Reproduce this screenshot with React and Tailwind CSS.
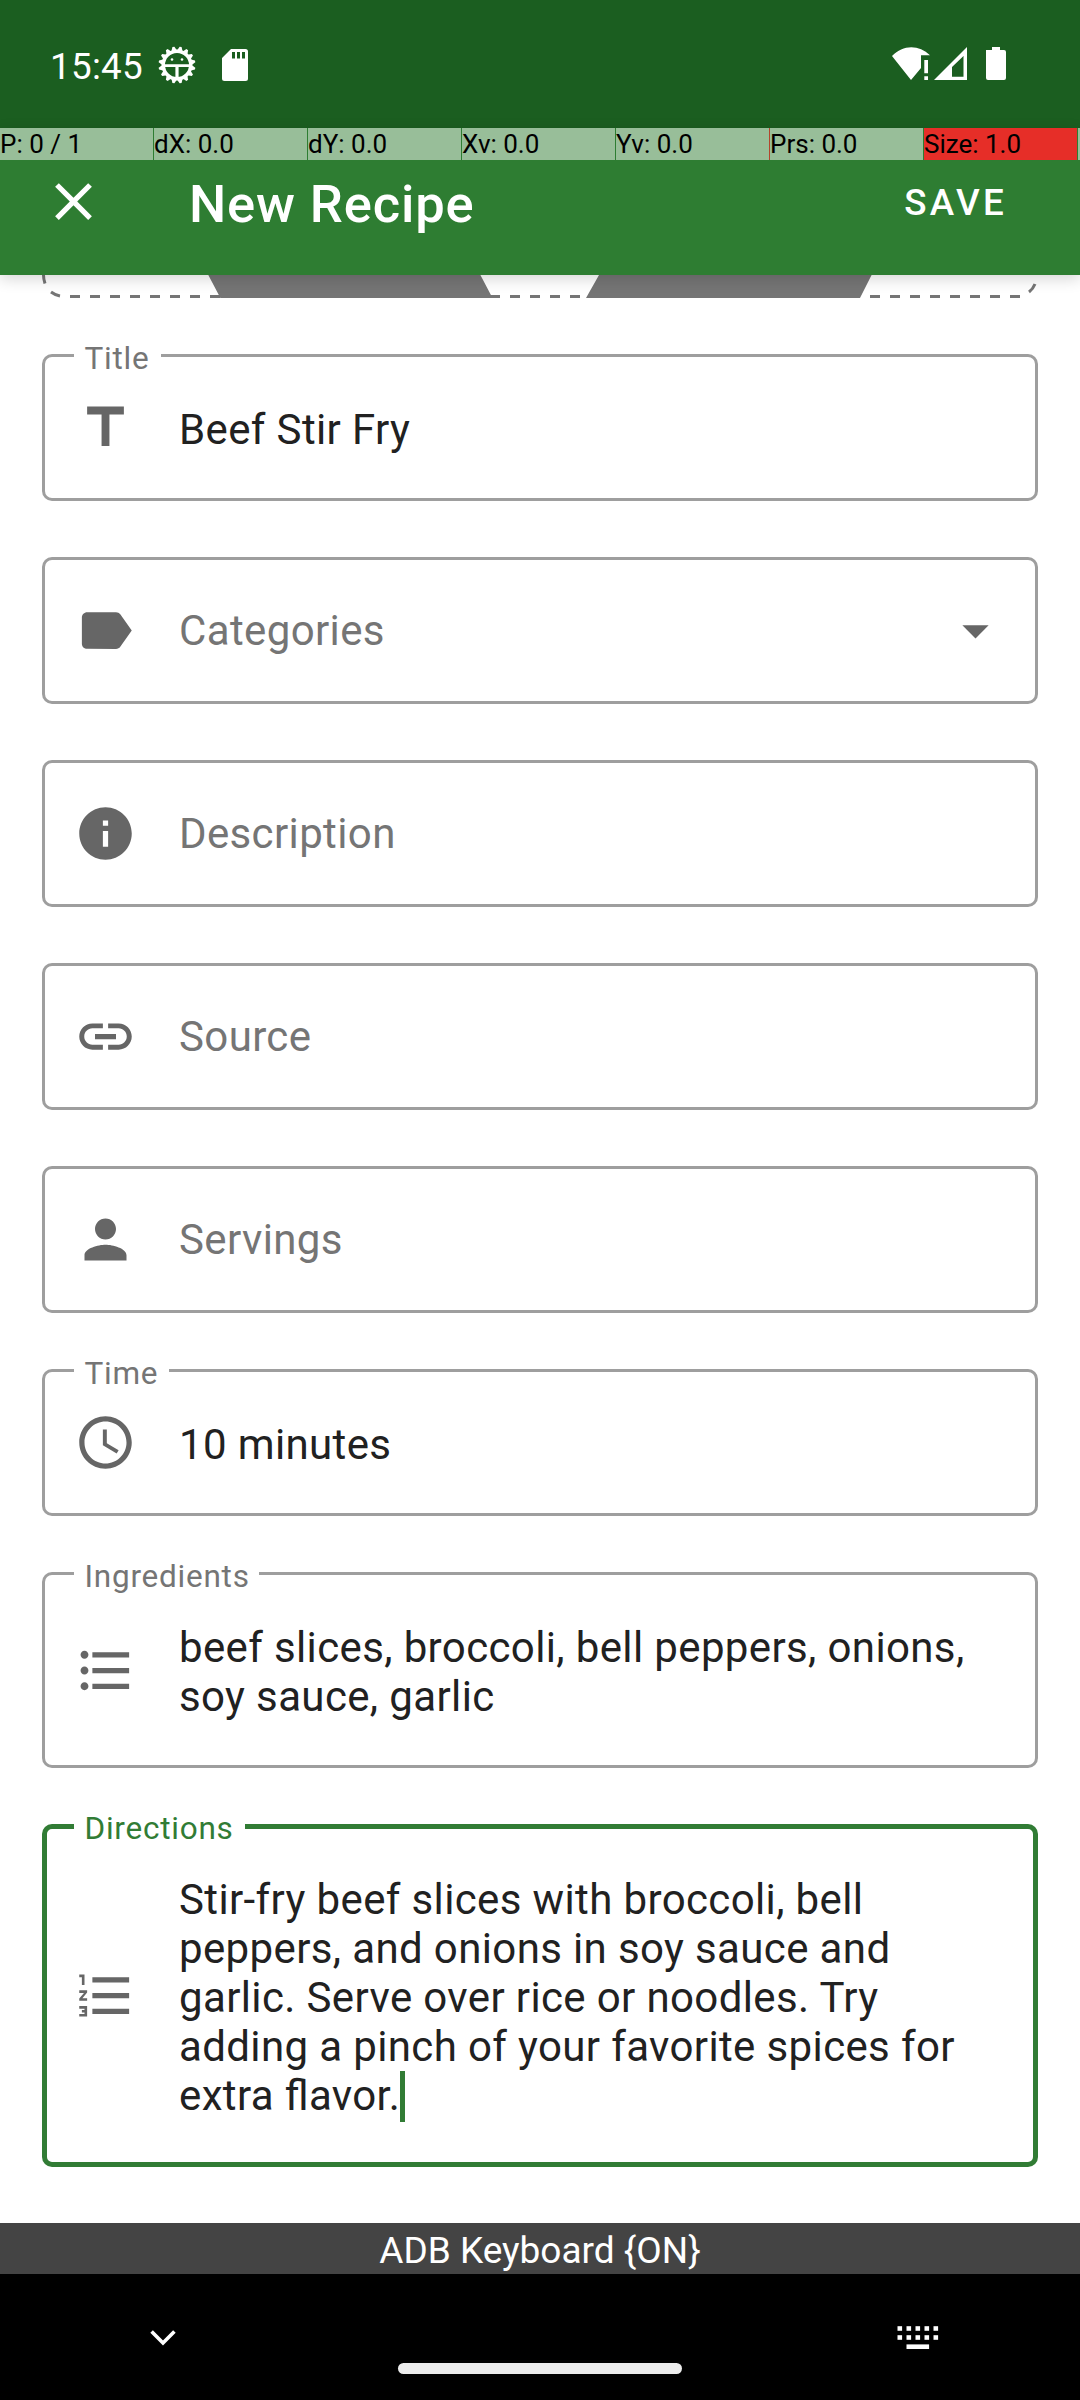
import React from "react";

function Icon({ d, className = "" }) {
  return (
    <svg viewBox="0 0 24 24" className={"size-[63px] shrink-0 " + className} fill="currentColor">
      <path d={d} />
    </svg>
  );
}

const ICONS = {
  close: "M19 6.41 17.59 5 12 10.59 6.41 5 5 6.41 10.59 12 5 17.59 6.41 19 12 13.41 17.59 19 19 17.59 13.41 12z",
  title: "M5 4v3h5.5v12h3V7H19V4z",
  label: "M17.63 5.84C17.27 5.33 16.67 5 16 5L5 5.01C3.9 5.01 3 5.9 3 7v10c0 1.1.9 1.99 2 1.99L16 19c.67 0 1.27-.33 1.63-.84L22 12l-4.37-6.16z",
  info: "M12 2C6.48 2 2 6.48 2 12s4.48 10 10 10 10-4.48 10-10S17.52 2 12 2zm1 15h-2v-6h2v6zm0-8h-2V7h2v2z",
  link: "M3.9 12c0-1.71 1.39-3.1 3.1-3.1h4V7H7c-2.76 0-5 2.24-5 5s2.24 5 5 5h4v-1.9H7c-1.71 0-3.1-1.39-3.1-3.1zM8 13h8v-2H8v2zm9-6h-4v1.9h4c1.71 0 3.1 1.39 3.1 3.1s-1.39 3.1-3.1 3.1h-4V17h4c2.76 0 5-2.24 5-5s-2.24-5-5-5z",
  person: "M12 12c2.21 0 4-1.79 4-4s-1.79-4-4-4-4 1.79-4 4 1.79 4 4 4zm0 2c-2.67 0-8 1.34-8 4v2h16v-2c0-2.66-5.33-4-8-4z",
  clock: "M11.99 2C6.47 2 2 6.48 2 12s4.47 10 9.99 10C17.52 22 22 17.52 22 12S17.52 2 11.99 2zM12 20c-4.42 0-8-3.58-8-8s3.58-8 8-8 8 3.58 8 8-3.58 8-8 8zm.5-13H11v6l5.25 3.15.75-1.23-4.5-2.67z",
  bullets: "M4 10.5c-.83 0-1.5.67-1.5 1.5s.67 1.5 1.5 1.5 1.5-.67 1.5-1.5-.67-1.5-1.5-1.5zm0-6c-.83 0-1.5.67-1.5 1.5S3.17 7.5 4 7.5 5.5 6.83 5.5 6 4.83 4.5 4 4.5zm0 12c-.83 0-1.5.68-1.5 1.5s.68 1.5 1.5 1.5 1.5-.68 1.5-1.5-.67-1.5-1.5-1.5zM7 19h14v-2H7v2zm0-6h14v-2H7v2zm0-8v2h14V5H7z",
  numbers: "M2 17h2v.5H3v1h1v.5H2v1h3v-4H2v1zm1-9h1V4H2v1h1v3zm-1 3h1.8L2 13.1v.9h3v-1H3.2L5 10.9V10H2v1zm5-6v2h14V5H7zm0 14h14v-2H7v2zm0-6h14v-2H7v2z",
  dropdown: "M7 10l5 5 5-5z",
};

function Field({ icon, label, gap = "", hint, lines, active, dropdown }) {
  return (
    <div
      className={
        "relative flex items-center rounded-[10px] pl-8 pr-[31px] " +
        (active ? "inset-ring-[5px] inset-ring-[#317c35]" : "inset-ring-[3px] inset-ring-[#9e9e9e]")
      }
    >
      {label && (
        <span
          className={
            "absolute -top-[14px] left-8 bg-white pl-[10.5px] text-[31.5px] leading-[37px] tracking-[0.024em] whitespace-nowrap " +
            gap + (active ? " text-[#317c35]" : " text-[#757575]")
          }
        >
          {label}
        </span>
      )}
      <Icon d={ICONS[icon]} className="text-[#666666]" />
      <div
        className={
          "ml-[42px] grow text-[42px] leading-[49px] tracking-[0.0088em] whitespace-nowrap [font-feature-settings:'liga'_1] " +
          (hint ? "py-[49px] text-[#757575]" : "pt-[51px] pb-[47px] text-[#212121]")
        }
      >
        {hint}
        {lines &&
          lines.map((line, i) => (
            <p key={line} className="relative w-fit">
              {line}
              {active && i === lines.length - 1 && (
                <span className="absolute top-0 -right-[5px] h-[51px] w-[5px] bg-[#317c35]" />
              )}
            </p>
          ))}
      </div>
      {dropdown && <Icon d={ICONS.dropdown} className="text-[#666666]" />}
    </div>
  );
}

const POINTER = [
  ["P: 0 / 1", "bg-[#98be99]"],
  ["dX: 0.0", "bg-[#98be99]"],
  ["dY: 0.0", "bg-[#98be99]"],
  ["Xv: 0.0", "bg-[#98be99]"],
  ["Yv: 0.0", "bg-[#98be99]"],
  ["Prs: 0.0", "bg-[#98be99]"],
  ["Size: 1.0", "bg-[#e62e28]"],
];

const TEETH = Array.from({ length: 16 }, (_, i) => i * 22.5 + 11.25);

function StatusBar() {
  return (
    <header className="flex h-32 shrink-0 items-start bg-[#1b5e20] text-white">
      <span className="mt-[45px] ml-[50px] w-[96px] text-[36.75px] leading-[43px] tracking-[0.3px] whitespace-nowrap">
        15:45
      </span>
      <svg viewBox="0 0 40 40" className="mt-[45px] ml-[11px] size-10">
        <circle cx="20" cy="20" r="13.7" fill="none" stroke="white" strokeWidth="3.4" />
        {TEETH.map((a) => (
          <path key={a} d="M17 6 19 1.500h2L23 6z" fill="white" transform={`rotate(${a} 20 20)`} />
        ))}
        <path d="M7 19.200h26v2.800H21.600v12h-3.200V22H7z" fill="white" />
        <circle cx="15" cy="14.500" r="1.300" fill="white" />
        <circle cx="25" cy="14.500" r="1.300" fill="white" />
      </svg>
      <svg viewBox="0 0 26 32" className="mt-[49px] ml-[25px] h-8 w-[26px]">
        <path
          fill="white"
          fillRule="evenodd"
          d="M9 0h14.5a2.5 2.5 0 0 1 2.5 2.5v27a2.5 2.5 0 0 1-2.5 2.5h-21A2.5 2.5 0 0 1 0 29.500V9zM10 3v6.500h3V3zM15 3v6.500h3V3zM20 3v6.500h3V3z"
        />
      </svg>
      <svg viewBox="0 0 116 36" className="mt-[46px] mr-[72px] ml-auto h-9 w-[116px]" fill="white">
        <path d="M0 10C11-1.500 27-1.500 38 9.300H29V22L19 34z" />
        <path d="M32.300 14H36v13.300h-3.700zM32.300 30.300H36V34h-3.700z" />
        <path fillRule="evenodd" d="M42 34 75 1v33zM60 21v9.700h11.500V10z" />
        <path d="M94 4h6V1h8v3h4a2 2 0 0 1 2 2v26a2 2 0 0 1-2 2H96a2 2 0 0 1-2-2z" />
      </svg>
    </header>
  );
}

export default function App() {
  return (
    <div className="flex h-[2400px] w-[1080px] flex-col overflow-hidden bg-white font-['Roboto',sans-serif]">
      <StatusBar />

      <div className="relative z-10 h-[147px] shrink-0 bg-[#2e7d32] shadow-[0_4px_14px_rgba(0,0,0,0.16)]">
        <div className="flex h-8">
          {POINTER.map(([text, color], i) => (
            <span
              key={text}
              className={
                "w-[154px] shrink-0 border-r text-[26px] leading-[33px] whitespace-nowrap text-black " +
                color + (i === 4 ? " border-[#b4442c]" : " border-[#2e7d32]")
              }
            >
              {text}
            </span>
          ))}
          <span className="grow bg-[#98be99]" />
        </div>
        <div className="flex h-[83px] items-center text-white">
          <Icon d={ICONS.close} className="ml-[42px]" />
          <h1 className="ml-[84px] pt-1 text-[52.5px] leading-[62px] font-medium tracking-[0.85px] whitespace-nowrap">
            New Recipe
          </h1>
          <span className="mr-[73px] ml-auto pt-[2px] text-[36.75px] leading-[43px] font-medium tracking-[0.0893em]">
            SAVE
          </span>
        </div>
      </div>

      <svg viewBox="0 275 1080 24" className="h-6 w-full shrink-0">
        <g fill="none" stroke="#757575" strokeWidth="3">
          <path d="M43.500 275Q43.500 279 45 283.500M51 292Q55 295 60 296" />
          <path d="M70 296.500H1020" strokeDasharray="10 10" />
          <path d="M1029 292Q1033 289 1035 284" />
        </g>
        <path fill="#757575" d="M208.300 275H480.400L492.500 298H220.400zM599 275H871.600L860 298H586z" />
      </svg>

      <main className="flex grow flex-col gap-14 px-[42px] pt-[55px]">
        <Field icon="title" label="Title" gap="w-[87px]" lines={["Beef Stir Fry"]} />
        <Field icon="label" hint="Categories" dropdown />
        <Field icon="info" hint="Description" />
        <Field icon="link" hint="Source" />
        <Field icon="person" hint="Servings" />
        <Field icon="clock" label="Time" gap="w-[95px]" lines={["10 minutes"]} />
        <Field
          icon="bullets"
          label="Ingredients"
          gap="w-[185px]"
          lines={["beef slices, broccoli, bell peppers, onions,", "soy sauce, garlic"]}
        />
        <Field
          icon="numbers"
          label="Directions"
          gap="w-[171px]"
          active
          lines={[
            "Stir-fry beef slices with broccoli, bell",
            "peppers, and onions in soy sauce and",
            "garlic. Serve over rice or noodles. Try",
            "adding a pinch of your favorite spices for",
            "extra flavor.",
          ]}
        />
      </main>

      <div className="h-[51px] shrink-0 bg-[#444444] pt-1 text-center text-[37px] leading-[47px] text-white">
        ADB Keyboard {"{ON}"}
      </div>

      <nav className="flex h-[126px] shrink-0 items-start bg-black pl-[150px] text-white">
        <svg viewBox="0 0 26 16" className="mt-[56px] h-4 w-[26px]">
          <path d="M1.600 1.600 13 13 24.400 1.600" fill="none" stroke="white" strokeWidth="3.600" />
        </svg>
        <div className="mt-[89px] ml-[222px] h-[11px] w-[284px] rounded-full bg-[#ececec]" />
        <svg viewBox="0 0 42 24" className="mt-[52px] ml-[215px] h-6 w-[42px]" fill="white">
          {[0, 1, 2, 3, 4].map((c) => (
            <g key={c}>
              <rect x={0.500 + c * 9} y="0.200" width="4.600" height="4.600" />
              <rect x={0.500 + c * 9} y="9.200" width="4.600" height="4.600" />
            </g>
          ))}
          <rect x="9.500" y="18.400" width="22.600" height="4.600" />
        </svg>
      </nav>
    </div>
  );
}
